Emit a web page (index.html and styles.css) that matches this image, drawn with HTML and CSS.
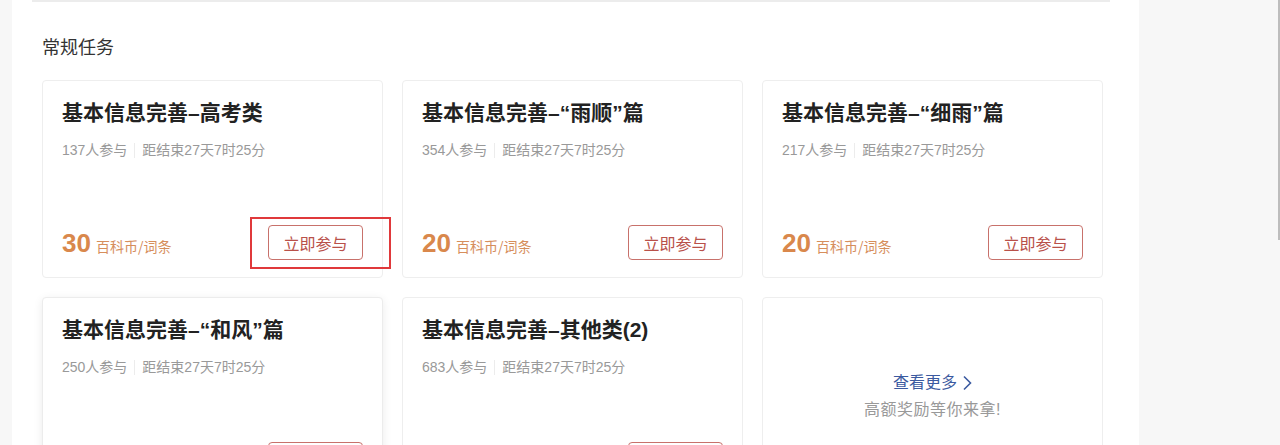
FILE: index.html
```html
<!DOCTYPE html>
<html lang="zh-CN">
<head>
<meta charset="utf-8">
<title>常规任务</title>
<link rel="stylesheet" href="styles.css">
</head>
<body>
<div class="panel">
  <div class="topline"></div>
  <h2 class="heading">常规任务</h2>
  <div class="grid">
    <div class="card">
      <div class="title">基本信息完善–高考类</div>
      <div class="meta"><span>137人参与</span><span class="sep"></span><span>距结束27天7时25分</span></div>
      <div class="foot">
        <div class="price"><span class="num">30</span><span class="unit">百科币/词条</span></div>
        <button class="join">立即参与</button>
        <div class="mark"></div>
      </div>
    </div>
    <div class="card">
      <div class="title">基本信息完善–“雨顺”篇</div>
      <div class="meta"><span>354人参与</span><span class="sep"></span><span>距结束27天7时25分</span></div>
      <div class="foot">
        <div class="price"><span class="num">20</span><span class="unit">百科币/词条</span></div>
        <button class="join">立即参与</button>
      </div>
    </div>
    <div class="card">
      <div class="title">基本信息完善–“细雨”篇</div>
      <div class="meta"><span>217人参与</span><span class="sep"></span><span>距结束27天7时25分</span></div>
      <div class="foot">
        <div class="price"><span class="num">20</span><span class="unit">百科币/词条</span></div>
        <button class="join">立即参与</button>
      </div>
    </div>
    <div class="card card-hover">
      <div class="title">基本信息完善–“和风”篇</div>
      <div class="meta"><span>250人参与</span><span class="sep"></span><span>距结束27天7时25分</span></div>
      <div class="foot">
        <div class="price"><span class="num">20</span><span class="unit">百科币/词条</span></div>
        <button class="join">立即参与</button>
      </div>
    </div>
    <div class="card">
      <div class="title">基本信息完善–其他类(2)</div>
      <div class="meta"><span>683人参与</span><span class="sep"></span><span>距结束27天7时25分</span></div>
      <div class="foot">
        <div class="price"><span class="num">20</span><span class="unit">百科币/词条</span></div>
        <button class="join">立即参与</button>
      </div>
    </div>
    <div class="card card-more">
      <a class="more">查看更多<svg class="chev" width="10" height="16" viewBox="0 0 10 16"><path d="M2 1.5 L8.5 8 L2 14.5" fill="none" stroke="#3b5aa0" stroke-width="1.6"/></svg></a>
      <div class="more-sub">高额奖励等你来拿!</div>
    </div>
  </div>
</div>
<div class="scroll"></div>
</body>
</html>
```
FILE: styles.css
```css
* { box-sizing: border-box; }
html, body { margin: 0; padding: 0; }
body {
  background: #f7f7f7;
  font-family: "Liberation Sans", "Noto Sans CJK SC", sans-serif;
  height: 445px;
  overflow: hidden;
}
.panel {
  margin-left: 12px;
  width: 1127px;
  height: 445px;
  background: #fff;
}
.topline {
  margin-left: 20px;
  width: 1078px;
  height: 2px;
  background: #ececec;
}
.heading {
  margin: 34px 0 0 30px;
  font-size: 18px;
  line-height: 24px;
  font-weight: 400;
  color: #333;
}
.grid {
  margin: 20px 0 0 30px;
  display: grid;
  grid-template-columns: repeat(3, 341px);
  grid-auto-rows: 198px;
  gap: 19px;
}
.card {
  position: relative;
  border: 1px solid #eeeeee;
  border-radius: 4px;
  background: #fff;
  padding: 18px 19px 17px 19px;
  display: flex;
  flex-direction: column;
}
.card-hover {
  border-color: #ececec;
  box-shadow: 0 2px 10px rgba(0,0,0,0.08);
}
.title {
  font-size: 21px;
  line-height: 28px;
  font-weight: 700;
  color: #222;
}
.meta {
  margin-top: 14px;
  font-size: 14px;
  line-height: 18px;
  color: #999;
  display: flex;
  align-items: center;
}
.sep {
  width: 1px;
  height: 15px;
  background: #ececec;
  margin: 0 7px;
}
.foot {
  margin-top: auto;
  position: relative;
  display: flex;
  justify-content: space-between;
  align-items: center;
  height: 35px;
}
.price { display: flex; align-items: baseline; color: #d9884c; }
.num { font-size: 26px; font-weight: 700; line-height: 30px; }
.unit {
  font-family: "Noto Sans CJK SC", sans-serif;
  font-size: 14px;
  margin-left: 5px;
  color: #d68e5c;
}
.join {
  width: 95px;
  height: 35px;
  border: 1px solid #c8716b;
  border-radius: 4px;
  background: #fff;
  color: #b9514a;
  font-family: inherit;
  font-size: 16px;
  padding: 0;
}
.mark {
  position: absolute;
  right: -28px;
  top: -8px;
  width: 141px;
  height: 52px;
  border: 2px solid #e0393b;
}
.card-more {
  align-items: center;
  justify-content: center;
  padding: 0;
}
.more {
  color: #3b5aa0;
  font-size: 16px;
  line-height: 22px;
  display: flex;
  align-items: center;
  gap: 5px;
}
.more-sub {
  margin-top: 6px;
  color: #999;
  font-size: 16px;
  letter-spacing: 0.5px;
  line-height: 20px;
}
.scroll {
  position: absolute;
  right: 0;
  top: 0;
  width: 2px;
  height: 240px;
  background: #bdbdbd;
}
```
